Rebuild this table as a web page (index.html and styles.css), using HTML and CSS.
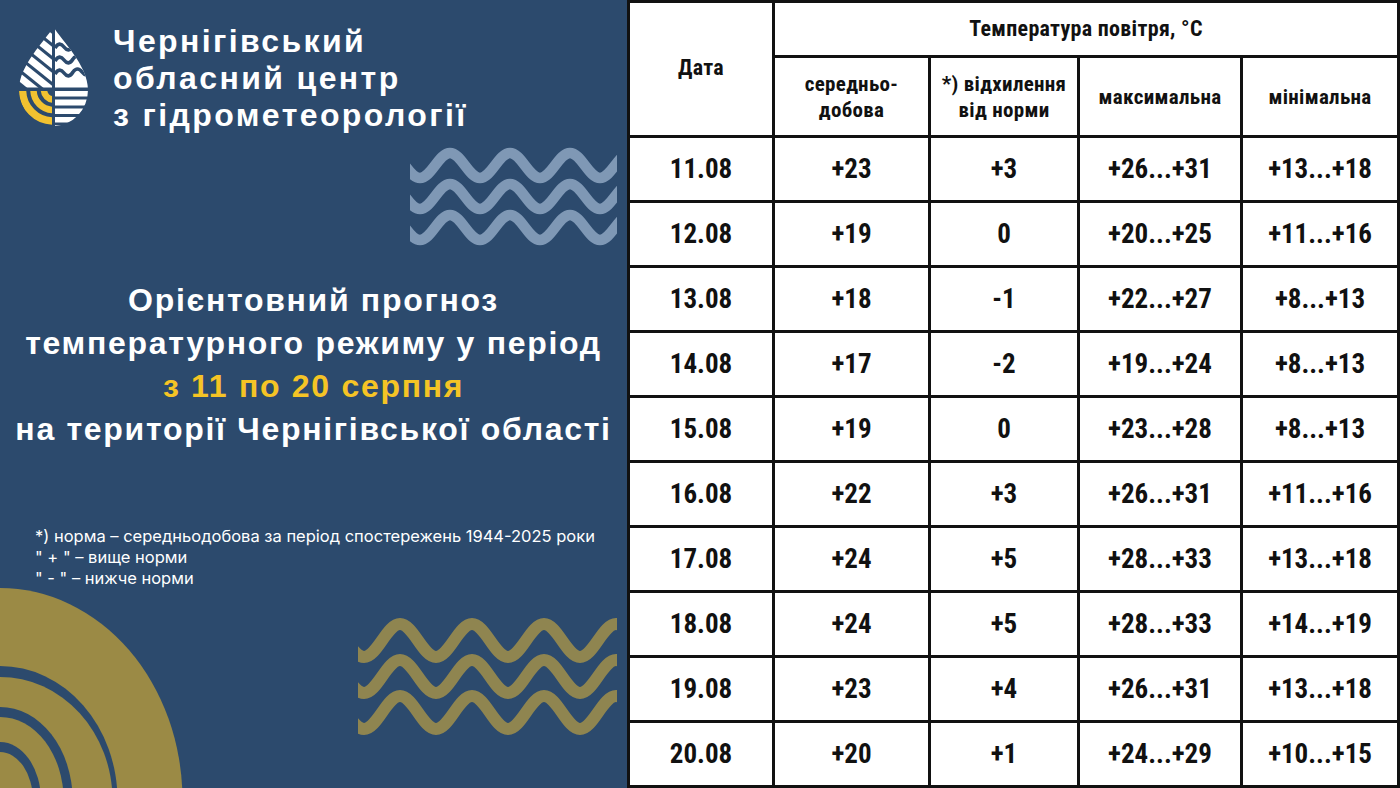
FILE: index.html
```html
<!DOCTYPE html>
<html lang="uk">
<head>
<meta charset="utf-8">
<title>Прогноз температурного режиму</title>
<link rel="stylesheet" href="styles.css">
</head>
<body>
<div class="slide">
  <section class="panel">
    <header class="brand">
      <svg class="logo" width="72" height="100" viewBox="0 0 72 100">
        <defs>
          <clipPath id="drop"><path d="M35.5 0 C27 14 1 38 1 63 A34.5 36 0 0 0 70 63 C70 38 44 14 35.5 0 Z"/></clipPath>
          <clipPath id="ul"><rect x="0" y="0" width="34" height="60.5"/></clipPath>
          <clipPath id="ll"><rect x="0" y="64" width="34" height="40"/></clipPath>
        </defs>
        <g clip-path="url(#drop)">
          <g clip-path="url(#ul)" stroke="#fff" stroke-width="7">
            <path d="M-20 -32 L60 32"/>
            <path d="M-20 -19 L60 45"/>
            <path d="M-20 -6 L60 58"/>
            <path d="M-20 7 L60 71"/>
            <path d="M-20 20 L60 84"/>
            <path d="M-20 33 L60 97"/>
          </g>
          <rect x="37" y="0" width="40" height="60.5" fill="#fff"/>
          <g fill="none" stroke="#2c4a6d" stroke-width="3.6">
            <path d="M37 21 C40 16 43 16 46 20 C49 24 52 24 55 19 C58 15 61 15 64 19 C67 23 70 23 73 18"/>
            <path d="M37 34 C40 29 43 29 46 33 C49 37 52 37 55 32 C58 28 61 28 64 32 C67 36 70 36 73 31"/>
            <path d="M37 47 C40 42 43 42 46 46 C49 50 52 50 55 45 C58 41 61 41 64 45 C67 49 70 49 73 44"/>
          </g>
          <g clip-path="url(#ll)" fill="none" stroke="#f2c230">
            <circle cx="35.5" cy="63" r="31" stroke-width="7.5"/>
            <circle cx="35.5" cy="63" r="20" stroke-width="6.5"/>
            <circle cx="35.5" cy="63" r="9.5" stroke-width="6.5"/>
          </g>
          <g fill="#fff">
            <rect x="37" y="64" width="40" height="5.5"/>
            <rect x="37" y="72.5" width="40" height="6"/>
            <rect x="37" y="81.5" width="40" height="5.5"/>
            <rect x="37" y="90" width="40" height="5.5"/>
            <rect x="37" y="98" width="40" height="5"/>
          </g>
        </g>
      </svg>
      <h1 class="brand-name">Чернігівський<br>обласний центр<br>з гідрометеорології</h1>
    </header>

    <h2 class="headline">Орієнтовний прогноз<br>температурного режиму у період<br><span class="period">з 11 по 20 серпня</span><br>на території Чернігівської області</h2>

    <p class="note">*) норма – середньодобова за період спостережень 1944-2025 роки<br>" + " – вище норми<br>" - " – нижче норми</p>

    <svg class="deco waves-light" width="207" height="110" viewBox="0 0 207 110">
      <g fill="none" stroke="#7f98b5" stroke-width="10.5">
        <path id="lw" d="M-20 10 C-9 10 -1 35 10 35 C21 35 29 10 40 10 C51 10 59 35 70 35 C81 35 89 10 100 10 C111 10 119 35 130 35 C141 35 149 10 160 10 C171 10 179 35 190 35 C201 35 209 10 220 10"/>
        <use href="#lw" y="31"/>
        <use href="#lw" y="62"/>
      </g>
    </svg>

    <svg class="deco arcs" width="200" height="215" viewBox="0 0 200 215">
      <ellipse cx="0" cy="227" rx="182.5" ry="212" fill="#9b8a45"/>
      <ellipse cx="0" cy="227" rx="117.5" ry="134" fill="#2c4a6d"/>
      <ellipse cx="0" cy="227" rx="112.5" ry="123" fill="#9b8a45"/>
      <ellipse cx="0" cy="227" rx="72.6" ry="93" fill="#2c4a6d"/>
      <ellipse cx="0" cy="227" rx="63.6" ry="83" fill="#9b8a45"/>
      <ellipse cx="0" cy="227" rx="40.9" ry="58" fill="#2c4a6d"/>
      <ellipse cx="0" cy="227" rx="32.9" ry="48" fill="#9b8a45"/>
    </svg>

    <svg class="deco waves-gold" width="259" height="135" viewBox="0 0 259 135">
      <g fill="none" stroke="#8f8550" stroke-width="12">
        <path id="gw" d="M-30 14 C-17 14 -7 47 6 47 C19 47 29 14 42 14 C55 14 65 47 78 47 C91 47 101 14 114 14 C127 14 137 47 150 47 C163 47 173 14 186 14 C199 14 209 47 222 47 C235 47 245 14 258 14 C271 14 281 47 294 47"/>
        <use href="#gw" y="36"/>
        <use href="#gw" y="72"/>
      </g>
    </svg>
  </section>

  <section class="table-side">
    <table class="forecast">
      <colgroup>
        <col class="c-date"><col class="c-avg"><col class="c-dev"><col class="c-max"><col class="c-min">
      </colgroup>
      <thead>
        <tr class="h1">
          <th rowspan="2" class="th-date">Дата</th>
          <th colspan="4" class="th-group">Температура повітря, °C</th>
        </tr>
        <tr class="h2">
          <th>середньо-<br>добова</th>
          <th>*) відхилення<br>від норми</th>
          <th>максимальна</th>
          <th>мінімальна</th>
        </tr>
      </thead>
      <tbody>
        <tr><td>11.08</td><td>+23</td><td>+3</td><td>+26...+31</td><td>+13...+18</td></tr>
        <tr><td>12.08</td><td>+19</td><td>0</td><td>+20...+25</td><td>+11...+16</td></tr>
        <tr><td>13.08</td><td>+18</td><td>-1</td><td>+22...+27</td><td>+8...+13</td></tr>
        <tr><td>14.08</td><td>+17</td><td>-2</td><td>+19...+24</td><td>+8...+13</td></tr>
        <tr><td>15.08</td><td>+19</td><td>0</td><td>+23...+28</td><td>+8...+13</td></tr>
        <tr><td>16.08</td><td>+22</td><td>+3</td><td>+26...+31</td><td>+11...+16</td></tr>
        <tr><td>17.08</td><td>+24</td><td>+5</td><td>+28...+33</td><td>+13...+18</td></tr>
        <tr><td>18.08</td><td>+24</td><td>+5</td><td>+28...+33</td><td>+14...+19</td></tr>
        <tr><td>19.08</td><td>+23</td><td>+4</td><td>+26...+31</td><td>+13...+18</td></tr>
        <tr><td>20.08</td><td>+20</td><td>+1</td><td>+24...+29</td><td>+10...+15</td></tr>
      </tbody>
    </table>
  </section>
</div>
</body>
</html>
```

FILE: styles.css
```css
* { box-sizing: border-box; }

html, body {
  margin: 0;
  padding: 0;
  background: #2c4a6d;
}

.slide {
  width: 1400px;
  height: 788px;
  display: flex;
  overflow: hidden;
}

.panel {
  position: relative;
  width: 627px;
  height: 788px;
  background: #2c4a6d;
  color: #fff;
  overflow: hidden;
  flex: none;
}

.brand {
  display: flex;
  align-items: flex-start;
  padding: 23px 0 0 18px;
}

.logo {
  display: block;
  margin-top: 4px;
  flex: none;
}

.brand-name {
  margin: 0 0 0 23px;
  font-family: "Liberation Sans", "Arimo", sans-serif;
  font-weight: 700;
  font-size: 32px;
  line-height: 37px;
  letter-spacing: 2.4px;
  color: #fff;
}

.headline {
  position: relative;
  z-index: 1;
  margin: 145px 0 0;
  text-align: center;
  font-family: "Liberation Sans", "Roboto", sans-serif;
  font-weight: 700;
  font-size: 32px;
  line-height: 43px;
  letter-spacing: 1.7px;
  color: #fff;
}

.period { color: #f5c425; }

.note {
  position: relative;
  z-index: 1;
  margin: 75px 0 0;
  padding-left: 35px;
  font-family: "Inter", "Roboto", sans-serif;
  font-weight: 400;
  font-size: 16.5px;
  line-height: 21px;
  color: #fff;
}

.deco {
  position: absolute;
  display: block;
}

.waves-light { left: 410px; top: 143px; }
.arcs { left: 0; top: 573px; }
.waves-gold { left: 358px; top: 610px; }

.table-side {
  flex: 1;
  background: #fff;
}

table.forecast {
  width: 773px;
  height: 788px;
  border-collapse: collapse;
  table-layout: fixed;
  border: 3px solid #111;
  font-family: "Liberation Sans Narrow", "Roboto Condensed", "Roboto", sans-serif;
  font-weight: 700;
  color: #111;
  background: #fff;
}

.c-date { width: 145px; }
.c-avg { width: 156px; }
.c-dev { width: 149px; }
.c-max { width: 163px; }
.c-min { width: 157px; }

table.forecast th,
table.forecast td {
  border: 3px solid #111;
  text-align: center;
  vertical-align: middle;
  padding: 0;
}

table.forecast th {
  font-size: 21px;
  line-height: 26px;
  letter-spacing: 0.3px;
}

table.forecast th.th-group {
  font-size: 22px;
}

table.forecast th.th-date {
  font-size: 22px;
  padding-bottom: 2px;
}

.h1 { height: 55px; }
.h2 { height: 80px; }

table.forecast td {
  font-size: 27px;
  height: 65px;
}
```
